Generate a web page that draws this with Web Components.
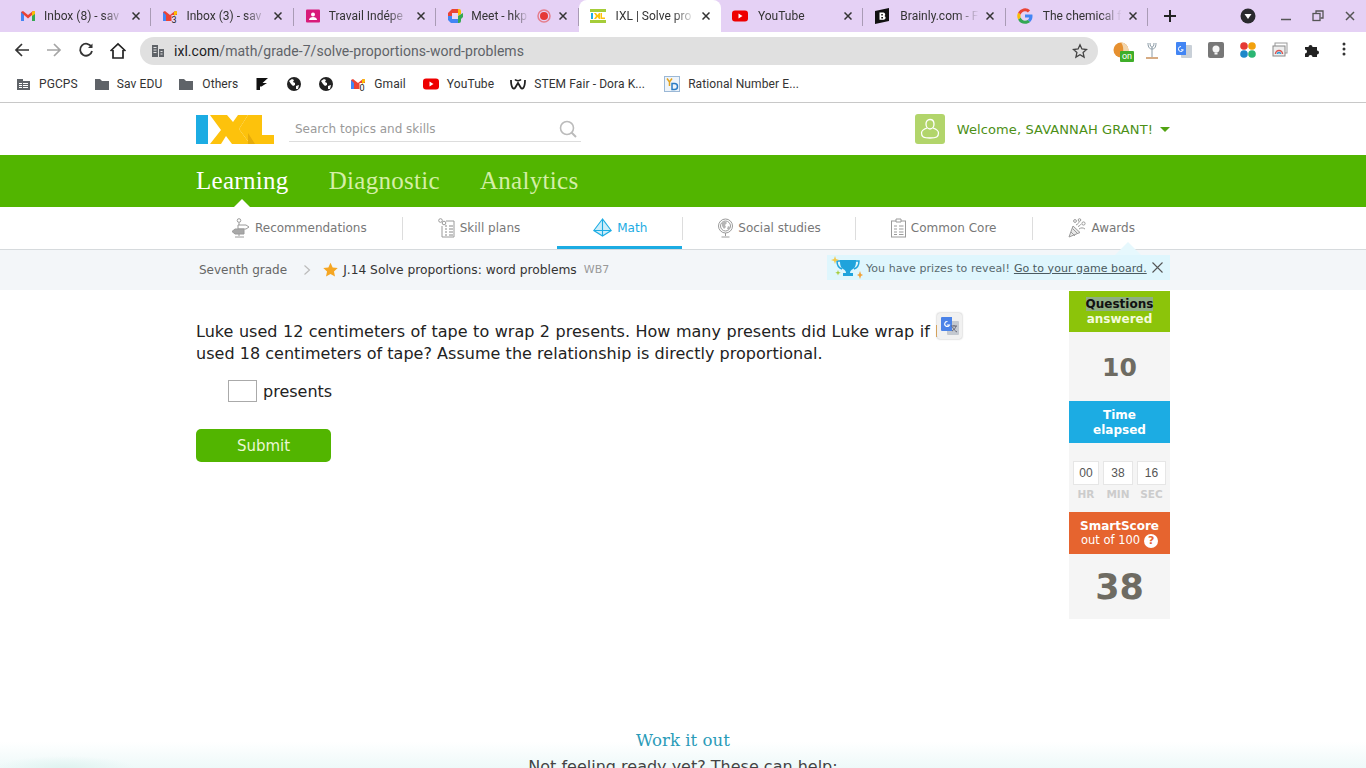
<!DOCTYPE html>
<html lang="en">
<head>
<meta charset="utf-8">
<title>IXL | Solve proportions: word problems</title>
<style>
  html, body { margin: 0; height: 768px; overflow: hidden; background: #fff; }
  body { font-family: "DejaVu Sans", sans-serif; }
  svg { display: block; }
</style>
</head>
<body>

<browser-strip>
  <browser-tab label="Inbox (8) - sav">
    <svg slot="icon" width="16" height="16" viewBox="0 0 16 16"><path d="M1 13V4l2-1 5 4 5-4 2 1v9h-3V7L8 10.500 4 7v6z" fill="#ea4335"/><path d="M1 13V4l3 3v6z" fill="#4285f4"/><path d="M15 13V4l-3 3v6z" fill="#34a853"/><path d="M12 3.500 15 3v3l-3 2z" fill="#fbbc04"/></svg>
  </browser-tab>
  <browser-tab label="Inbox (3) - sav">
    <svg slot="icon" width="16" height="16" viewBox="0 0 16 16"><path d="M1 13V4l2-1 5 4 5-4 2 1v3H9.500v6H12H4V7z" fill="#ea4335"/><path d="M1 13V4l3 3v6z" fill="#4285f4"/><path d="M12 3.500 15 3v3l-3 2z" fill="#fbbc04"/><text x="9.500" y="15" font-size="9" font-family="Roboto" fill="#222">3</text></svg>
  </browser-tab>
  <browser-tab label="Travail Indépe">
    <svg slot="icon" width="16" height="16" viewBox="0 0 16 16"><rect x="1" y="1.500" width="14" height="13" rx="1" fill="#d81b7a"/><circle cx="8" cy="6.500" r="2" fill="#fff"/><path d="M4 12c0-2 2-3 4-3s4 1 4 3z" fill="#fff"/></svg>
  </browser-tab>
  <browser-tab label="Meet - hkp" short>
    <svg slot="icon" width="16" height="16" viewBox="0 0 16 16"><path d="M1 5l4-4h6v4H5v3H1z" fill="#ea4335"/><path d="M1 8h4v3h6v4H4l-3-3z" fill="#4285f4"/><path d="M11 1h1a2 2 0 0 1 2 2v3l-3 2z" fill="#fbbc04"/><path d="M11 15h1a2 2 0 0 0 2-2v-2l2-2V5l-5 3z" fill="#34a853"/><rect x="5" y="5" width="6" height="6" fill="#e8d4f5"/></svg>
    <svg slot="extra" width="14" height="14" viewBox="0 0 14 14"><circle cx="7" cy="7" r="6" fill="none" stroke="#e53935" stroke-opacity=".55" stroke-width="1.500"/><circle cx="7" cy="7" r="4" fill="#e53935"/></svg>
  </browser-tab>
  <browser-tab label="IXL | Solve pro" active late>
    <svg slot="icon" width="16" height="16" viewBox="0 0 16 16"><rect y="1" width="16" height="3" fill="#a5cd39"/><rect y="12" width="16" height="3" fill="#a5cd39"/><rect x="1" y="5" width="2" height="6" fill="#1cace3"/><path d="M4 5h2l1.500 2L9 5h1v6H9L7.500 9 6 11H4l2-3z" fill="#fdc20c"/><path d="M10.500 5h1.500v4.500h3V11h-4.500z" fill="#fdc20c"/></svg>
  </browser-tab>
  <browser-tab label="YouTube" late>
    <svg slot="icon" width="16" height="16" viewBox="0 0 16 16"><rect y="2.500" width="16" height="11" rx="3" fill="#e00"/><path d="M6.500 5.500v5l4-2.500z" fill="#fff"/></svg>
  </browser-tab>
  <browser-tab label="Brainly.com - F" late>
    <svg slot="icon" width="16" height="16" viewBox="0 0 16 16"><path d="M1 3l14-3v13L1 16z" fill="#111"/><path d="M5.500 4.500h4a2 2 0 0 1 1 3.500 2 2 0 0 1-1 3.800h-4zM7.300 6v1.500h1.500V6zm0 3v1.500h1.700V9z" fill="#fff" fill-rule="evenodd"/></svg>
  </browser-tab>
  <browser-tab label="The chemical f" late>
    <svg slot="icon" width="16" height="16" viewBox="0 0 16 16"><path d="M15.500 8.200c0-.6 0-1.100-.2-1.600H8v3h4.200a3.600 3.600 0 0 1-1.600 2.400l2.500 1.900c1.500-1.300 2.400-3.300 2.400-5.700z" fill="#4285f4"/><path d="M8 15.700c2.100 0 3.800-.7 5.100-1.800L10.600 12c-.7.500-1.500.7-2.600.7-2 0-3.700-1.300-4.300-3.200L1.100 11.400A7.700 7.700 0 0 0 8 15.700z" fill="#34a853"/><path d="M3.700 9.500a4.700 4.700 0 0 1 0-3L1.100 4.600a7.700 7.700 0 0 0 0 6.800z" fill="#fbbc04"/><path d="M8 3.300c1.100 0 2.100.4 2.900 1.100l2.200-2.200A7.700 7.700 0 0 0 1.100 4.600l2.600 1.900C4.300 4.600 6 3.300 8 3.300z" fill="#ea4335"/></svg>
  </browser-tab>
</browser-strip>

<browser-toolbar></browser-toolbar>

<bookmark-bar>
  <book-mark label="PGCPS"><svg width="16" height="16" viewBox="0 0 16 16"><path d="M1 3h6v2h7v9H1z" fill="#5f6368"/><path d="M3 7h3v1H3zm4 0h5v1H7zm-4 2h3v1H3zm4 0h5v1H7zm-4 2h3v1H3zm4 0h5v1H7z" fill="#fff"/></svg></book-mark>
  <book-mark label="Sav EDU"><svg width="16" height="16" viewBox="0 0 16 16"><path d="M1 3h5l2 2h7v9H1z" fill="#5f6368"/></svg></book-mark>
  <book-mark label="Others" style="gap:8px"><svg width="16" height="16" viewBox="0 0 16 16"><path d="M1 3h5l2 2h7v9H1z" fill="#5f6368"/></svg></book-mark>
  <book-mark><svg width="16" height="16" viewBox="0 0 16 16"><path d="M2.500 2H14L8.500 7H13L7.500 10.500H6V14H2.500z" fill="#111"/></svg></book-mark>
  <book-mark><svg width="16" height="16" viewBox="0 0 16 16"><circle cx="8" cy="8" r="7" fill="#222"/><path d="M3 5l3-2 2 1-1 2 2 1v2l-2 1-2-2zM10 10l3-1-1 4-2 0z" fill="#fff"/></svg></book-mark>
  <book-mark><svg width="16" height="16" viewBox="0 0 16 16"><circle cx="8" cy="8" r="7" fill="#222"/><path d="M3 5l3-2 2 1-1 2 2 1v2l-2 1-2-2zM10 10l3-1-1 4-2 0z" fill="#fff"/></svg></book-mark>
  <book-mark label="Gmail" style="gap:8px"><svg width="16" height="16" viewBox="0 0 16 16"><path d="M1 13V4l2-1 5 4 5-4 2 1v3H9.500v6H12H4V7z" fill="#ea4335"/><path d="M1 13V4l3 3v6z" fill="#4285f4"/><path d="M12 3.500 15 3v3l-3 2z" fill="#fbbc04"/><text x="9.500" y="15" font-size="9" font-family="Roboto" fill="#222">0</text></svg></book-mark>
  <book-mark label="YouTube" style="margin-left:1px;gap:8px"><svg width="16" height="16" viewBox="0 0 16 16"><rect y="2.500" width="16" height="11" rx="3" fill="#e00"/><path d="M6.500 5.500v5l4-2.500z" fill="#fff"/></svg></book-mark>
  <book-mark label="STEM Fair - Dora K..." style="gap:8px"><svg width="16" height="16" viewBox="0 0 16 16"><path d="M1 4c0 8.500 3 10 4.300 7.500L8 7l2.700 4.500C12 14 15 12.500 15 4" fill="none" stroke="#222" stroke-width="1.800"/><path d="M5 3.500C6 5 10 5 11 3.500" fill="none" stroke="#222" stroke-width="1.500"/></svg></book-mark>
  <book-mark label="Rational Number E..." style="margin-left:3px;gap:8px"><svg width="16" height="16" viewBox="0 0 16 16"><rect x=".5" y=".5" width="15" height="15" fill="#eef4fa" stroke="#9bb8d6"/><path d="M3 2.500l2.500 3.500L8 2.500M5.500 6v4" fill="none" stroke="#e2a31e" stroke-width="1.500"/><path d="M8 7.500h2.500a3 3 0 0 1 0 6H8z" fill="none" stroke="#2b7cc4" stroke-width="1.500"/></svg></book-mark>
</bookmark-bar>

<ixl-header></ixl-header>
<ixl-nav></ixl-nav>

<ixl-subnav>
  <sub-item label="Recommendations" style="padding:0 35px"><svg width="19" height="20" viewBox="0 0 19 20" fill="none" stroke="#9a9a9a"><circle cx="8" cy="2.500" r="1.800"/><path d="M8 4.500V7M8 14v4M4 19h9M7 7h8l3 2-3 2H7z"/><path d="M13 11H4l-3 2.500L4 16h9z" fill="#a8a8a8"/></svg></sub-item>
  <sub-item label="Skill plans" style="padding-right:37px"><svg width="17" height="20" viewBox="0 0 17 20" fill="none" stroke="#9a9a9a"><circle cx="2.500" cy="2.500" r="1.800"/><circle cx="6" cy="5" r="1.800"/><path d="M8 3h8v16H4V8"/><path d="M7 8h2M11 8h4M7 11h2M11 11h4M7 14h2M11 14h4M7 17h2M11 17h4" stroke="#888"/></svg></sub-item>
  <sub-item label="Math" active style="padding-right:35px"><svg width="19" height="20" viewBox="0 0 19 20" fill="#1cace3" fill-opacity=".22" stroke="#1cace3" stroke-width="1.100"><path d="M9.500 1 .8 12.500 9.500 18l8.700-5.500zM9.500 1v17M.8 12.500h17.400"/></svg></sub-item>
  <sub-item label="Social studies" style="padding-right:34px"><svg width="15" height="20" viewBox="0 0 15 20" fill="none" stroke="#9a9a9a"><circle cx="7.500" cy="8" r="7"/><circle cx="7.500" cy="8" r="5"/><path d="M4 5l3-2 2 2-2 2 1 2-2 2-2-3zM10 8l2 1-1 3-2-1z" fill="#b5b5b5" stroke="none"/><path d="M7.500 15v3M3.500 19h8"/></svg></sub-item>
  <sub-item label="Common Core"><svg width="15" height="20" viewBox="0 0 15 20" fill="none" stroke="#9a9a9a"><rect x=".5" y="3" width="14" height="16"/><path d="M5 1h5v3H5z" fill="#fff"/><path d="M3 8h3M8 8h4.500M3 11h3M8 11h4.500M3 14h3M8 14h4.500M3 16.500h3M8 16.500h4.500"/></svg></sub-item>
  <sub-item label="Awards"><svg width="18" height="20" viewBox="0 0 18 20" fill="none" stroke="#9a9a9a"><path d="M1 19 5 8l7 6.500z" fill="#e8e8e8"/><path d="M3 14l4 4M4.500 10.500l5 5"/><circle cx="7" cy="3" r="1.400"/><circle cx="11.500" cy="2" r="1.300"/><circle cx="15.500" cy="5.500" r="1.600"/><path d="M8 7c2-1 3-2 3-3.500M11 11c2-1.500 4-1.500 6 0M10 8.500c1.500-.5 2.500-1.500 3-2.500"/></svg></sub-item>
</ixl-subnav>

<crumb-bar></crumb-bar>

<practice-area>
  <question-pane></question-pane>
  <stats-rail slot="rail"></stats-rail>
</practice-area>

<work-section></work-section>

<script>
// chrome tab, favicon comes in through the slot
class BrowserTab extends HTMLElement {
  constructor() {
    super();
    this.attachShadow({ mode: 'open' });
    this.shadowRoot.innerHTML = `
      <style>
        :host { display: flex; align-items: center; box-sizing: border-box; width: 142.400px; height: 32px; position: relative;
          padding-left: 11px; font: 12px Roboto, sans-serif; color: #333; flex: none; }
        :host([active]) { background: #fff; border-radius: 8px 8px 0 0; }
        :host(:not([active])) .sep { position: absolute; right: 0; top: 8px; height: 18px; width: 1px; background: #a99bb5; }
        .label { margin-left: 8px; width: 84px; white-space: nowrap;
          -webkit-mask-image: linear-gradient(to right, #000 70%, transparent 96%); }
        :host([late]) .label { margin-left: 10px; width: 82px; }
        :host([short]) .label { width: 60px; margin-right: 6px; }
        .close { margin-left: 4px; width: 8px; height: 8px; }
        :host([short]) .close { margin-left: 8px; }
      </style>
      <slot name="icon"></slot>
      <span class="label">${this.getAttribute('label')}</span>
      <slot name="extra"></slot>
      <svg class="close" viewBox="0 0 8 8"><path d="M.5.500l7 7M7.500.500l-7 7" stroke="#333" stroke-width="1.500" fill="none"/></svg>
      <span class="sep"></span>`;
  }
}

class BrowserStrip extends HTMLElement {
  constructor() {
    super();
    this.attachShadow({ mode: 'open' });
    this.shadowRoot.innerHTML = `
      <style>
        :host { display: flex; align-items: center; height: 32px; background: #e5d1f5; padding-left: 9px; }
        .plus { margin-left: 14px; }
        .right { margin-left: auto; display: flex; align-items: center; }
        .right svg { display: block; }
        .profile { margin-right: 14px; }
        .win { width: 32px; display: flex; justify-content: center; }
      </style>
      <slot></slot>
      <svg class="plus" width="16" height="16" viewBox="0 0 16 16"><path d="M8 2v12M2 8h12" stroke="#222" stroke-width="2"/></svg>
      <div class="right">
        <svg class="profile" width="16" height="16" viewBox="0 0 16 16"><circle cx="8" cy="8" r="7.500" fill="#2a2a2e"/><path d="M4.500 6h7L8 11z" fill="#fff"/></svg>
        <div class="win"><svg width="12" height="12" viewBox="0 0 12 12"><path d="M1 9.500h10" stroke="#555" stroke-width="1.500"/></svg></div>
        <div class="win"><svg width="12" height="12" viewBox="0 0 12 12" fill="none" stroke="#555" stroke-width="1.300"><rect x="1" y="3.500" width="7" height="7"/><path d="M4 3V1h7v7H8.500"/></svg></div>
        <div class="win"><svg width="12" height="12" viewBox="0 0 12 12"><path d="M2 2l8 8M10 2l-8 8" stroke="#555" stroke-width="1.500"/></svg></div>
      </div>`;
  }
}

class BrowserToolbar extends HTMLElement {
  constructor() {
    super();
    this.attachShadow({ mode: 'open' });
    this.shadowRoot.innerHTML = `
      <style>
        :host { display: flex; align-items: center; height: 38px; background: #fff; font: 14px Roboto, sans-serif; }
        svg { display: block; flex: none; }
        .btn { width: 32px; display: flex; justify-content: center; }
        .nav { display: flex; padding-left: 6px; margin-right: 6px; }
        .omni { width: 958px; height: 28px; border-radius: 14px; background: #e0e0e0; display: flex; align-items: center;
          box-sizing: border-box; padding: 0 10px 0 11px; color: #5f6368; flex: none; letter-spacing: .04px; }
        .omni b { font-weight: 400; color: #202124; }
        .url { margin-left: 9px; flex: 1; }
        .ext { display: flex; margin-left: 9px; }
      </style>
      <div class="nav">
        <div class="btn"><svg width="16" height="16" viewBox="0 0 16 16" fill="none" stroke="#333" stroke-width="1.700"><path d="M15 8H2M8 2 2 8l6 6"/></svg></div>
        <div class="btn"><svg width="16" height="16" viewBox="0 0 16 16" fill="none" stroke="#a5a5a5" stroke-width="1.700"><path d="M1 8h13M8 2l6 6-6 6"/></svg></div>
        <div class="btn"><svg width="16" height="16" viewBox="0 0 16 16" fill="none" stroke="#333" stroke-width="1.800"><path d="M13.500 5A6 6 0 1 0 14 9"/><path d="M14.500 1.500V6H10" fill="#333" stroke="none"/></svg></div>
        <div class="btn"><svg width="18" height="18" viewBox="0 0 18 18" fill="none" stroke="#222" stroke-width="1.700"><path d="M1.500 9 9 2l7.500 7M4 8v8h10V8"/></svg></div>
      </div>
      <div class="omni">
        <svg width="14" height="14" viewBox="0 0 14 14"><path d="M1 1h6v12H1zm7 4h5v8H8z" fill="#5f6368"/><path d="M2.500 3h3v1h-3zm0 2.500h3v1h-3zm0 2.500h3v1h-3zm7-1h2v1h-2zm0 2.500h2v1h-2z" fill="#e0e0e0"/></svg>
        <span class="url"><b>ixl.com</b>/math/grade-7/solve-proportions-word-problems</span>
        <svg width="16" height="16" viewBox="0 0 16 16"><path d="m8 1.800 1.900 4.200 4.600.5-3.400 3.100 1 4.500L8 11.800l-4.100 2.300 1-4.500-3.400-3.100 4.600-.5z" fill="none" stroke="#444" stroke-width="1.300"/></svg>
      </div>
      <div class="ext">
        <div class="btn" style="position:relative;width:29px"><svg width="18" height="18" viewBox="0 0 18 18"><circle cx="8" cy="8" r="7.500" fill="#e6902f"/><path d="M8 .500a7.500 7.500 0 0 1 0 15c3-3 3-12 0-15z" fill="#f2d6ae"/></svg><span style="position:absolute;left:13px;top:9px;width:14px;height:11px;background:#3fae29;color:#fff;font:9px/11px Roboto;text-align:center;border-radius:1px">on</span></div>
        <div class="btn"><svg width="16" height="18" viewBox="0 0 16 18" fill="none" stroke="#8a9aa5"><path d="M8 5v10M4 1c0 5 2 6 4 6s4-1 4-6M6 1c0 3 1 4 2 4s2-1 2-4"/><path d="M2 16h12" stroke="#c98f5a" stroke-width="1.500"/></svg></div>
        <div class="btn"><svg width="16" height="16" viewBox="0 0 16 16"><rect x="5" y="3" width="11" height="13" rx="1" fill="#c9d0d8"/><path d="M0 1a1 1 0 0 1 1-1h9v13H1a1 1 0 0 1-1-1z" fill="#4285f4"/><path d="M5 4.500a2.500 2.500 0 1 0 2.300 3.300H5" fill="none" stroke="#fff"/></svg></div>
        <div class="btn"><svg width="16" height="16" viewBox="0 0 16 16"><rect width="16" height="16" rx="2" fill="#777"/><circle cx="8" cy="7" r="3.500" fill="#f5f5f5"/><rect x="6.500" y="10.500" width="3" height="2" fill="#f5f5f5"/></svg></div>
        <div class="btn"><svg width="16" height="16" viewBox="0 0 16 16"><circle cx="4" cy="4" r="3.800" fill="#e53935"/><circle cx="12" cy="4" r="3.800" fill="#f2a10d"/><circle cx="4" cy="12" r="3.800" fill="#1e88c9"/><circle cx="12" cy="12" r="3.800" fill="#2bb673"/></svg></div>
        <div class="btn"><svg width="16" height="16" viewBox="0 0 16 16" fill="none"><rect x="3" y="1" width="12" height="10" fill="#fff" stroke="#999"/><rect x="1" y="4" width="12" height="10" fill="#eee" stroke="#888"/><path d="M3.500 12a3.500 3.500 0 0 1 7 0" stroke="#d9534f" stroke-width="1.500"/><path d="M5.500 12a1.500 1.500 0 0 1 3 0" stroke="#2f9fd8" stroke-width="1.500"/></svg></div>
        <div class="btn"><svg width="16" height="16" viewBox="0 0 16 16"><path d="M1 5h3.500a2 2 0 1 1 4 0H13v3.500a2 2 0 1 1 0 4V15H8.500a2 2 0 1 0-4 0H1v-3.500a2 2 0 1 0 0-4z" fill="#222"/></svg></div>
        <div class="btn"><svg width="4" height="14" viewBox="0 0 4 14"><circle cx="2" cy="2" r="1.500" fill="#333"/><circle cx="2" cy="7" r="1.500" fill="#333"/><circle cx="2" cy="12" r="1.500" fill="#333"/></svg></div>
      </div>`;
  }
}

class BookMark extends HTMLElement {
  constructor() {
    super();
    this.attachShadow({ mode: 'open' });
    const label = this.getAttribute('label');
    this.shadowRoot.innerHTML = `
      <style>
        :host { display: flex; align-items: center; gap: 7px; padding: 0 8px; font: 12px Roboto, sans-serif; letter-spacing: .1px; color: #333; white-space: nowrap; }
      </style>
      <slot></slot>${label ? `<span>${label}</span>` : ''}`;
  }
}

class BookmarkBar extends HTMLElement {
  constructor() {
    super();
    this.attachShadow({ mode: 'open' });
    this.shadowRoot.innerHTML = `
      <style>
        :host { display: flex; align-items: center; height: 28px; padding: 0 0 4px 8px; background: #fff; border-bottom: 1px solid #c8c8c8; }
      </style>
      <slot></slot>`;
  }
}

class IxlHeader extends HTMLElement {
  constructor() {
    super();
    this.attachShadow({ mode: 'open' });
    this.shadowRoot.innerHTML = `
      <style>
        :host { display: block; height: 52px; background: #fff; }
        .wrap { width: 974px; margin: 0 auto; height: 100%; display: flex; align-items: center; }
        .search { width: 292px; height: 26px; margin-left: 15px; box-sizing: border-box; border-bottom: 1px solid #ddd;
          display: flex; align-items: center; justify-content: space-between; padding: 0 4px 0 6px; font-size: 12px; color: #9a9a9a; }
        .user { margin-left: auto; display: flex; align-items: center; font-size: 13px; letter-spacing: .1px; color: #4c8f16; }
        .avatar { width: 30px; height: 30px; border-radius: 3px; background: #b2d56b; display: flex; align-items: center; justify-content: center; margin-right: 12px; }
        .caret { margin-left: 7px; width: 0; height: 0; border: 5px solid transparent; border-top: 5px solid #52a312; border-bottom: 0; }
      </style>
      <div class="wrap">
        <svg width="78" height="29" viewBox="0 0 78 29">
          <rect width="12" height="29" fill="#1cace3"/>
          <path d="M14 0h17l6 7 5-7h10L43 14l11 15H36l-6-8-5 8H14l11-14z" fill="#fdc20c"/>
          <path d="M52 0h14v20h12v9H54L43 14z" fill="#fdc20c"/>
          <path d="M52 12V29h7L52 18z" fill="#e6ab0a"/>
        </svg>
        <div class="search">
          <span>Search topics and skills</span>
          <svg width="18" height="18" viewBox="0 0 18 18" fill="none" stroke="#bbb" stroke-width="1.600"><circle cx="8" cy="8" r="6.500"/><path d="m12.500 12.500 4.500 4.500" stroke-width="2"/></svg>
        </div>
        <div class="user">
          <div class="avatar"><svg width="20" height="22" viewBox="0 0 20 22" fill="none" stroke="#fff" stroke-width="1.300"><path d="M10 1.500c2.800 0 4 2 4 4.500s-1.500 5-4 5-4-2.500-4-5 1.200-4.500 4-4.500z"/><path d="M7 10c-3 1-5.500 2-5.500 5 0 4 2 5 8.500 5s8.500-1 8.500-5c0-3-2.500-4-5.500-5"/></svg></div>
          <span>Welcome, SAVANNAH GRANT!</span>
          <span class="caret"></span>
        </div>
      </div>`;
  }
}

class IxlNav extends HTMLElement {
  constructor() {
    super();
    this.attachShadow({ mode: 'open' });
    this.shadowRoot.innerHTML = `
      <style>
        :host { display: block; height: 52px; background: #52b500; }
        .wrap { width: 974px; margin: 0 auto; height: 100%; display: flex; gap: 40px; align-items: center;
          font: 400 25px "Liberation Serif", serif; letter-spacing: .3px; color: #d4efa6; }
        span { position: relative; line-height: 52px; }
        .on { color: #fff; }
        .on::after { content: ""; position: absolute; left: 50%; bottom: 0; margin-left: -8px; border: 8px solid transparent; border-bottom-color: #fff; border-top: 0; }
      </style>
      <div class="wrap">
        <span class="on">Learning</span>
        <span>Diagnostic</span>
        <span>Analytics</span>
      </div>`;
  }
}

class SubItem extends HTMLElement {
  constructor() {
    super();
    this.attachShadow({ mode: 'open' });
    this.shadowRoot.innerHTML = `
      <style>
        :host { display: flex; align-items: center; justify-content: center; gap: 5px; height: 42px; padding: 0 36px; position: relative;
          font-size: 12px; color: #777; white-space: nowrap; flex: none; }
        :host([active]) { color: #1cace3; }
        .bar { position: absolute; left: 0; right: 0; bottom: 0; height: 3px; }
        :host([active]) .bar { background: #1cace3; }
        .sep { position: absolute; left: 0; top: 10px; height: 23px; width: 1px; background: #ddd; }
        :host(:first-child) .sep { display: none; }
        :host([active]) .sep { display: none; }
      </style>
      <span class="sep"></span>
      <slot></slot><span>${this.getAttribute('label')}</span><span class="bar"></span>`;
  }
}

class IxlSubnav extends HTMLElement {
  constructor() {
    super();
    this.attachShadow({ mode: 'open' });
    this.shadowRoot.innerHTML = `
      <style>
        :host { display: block; height: 42px; background: #fff; border-bottom: 1px solid #d6dadd; }
        .wrap { width: 974px; margin: 0 auto; display: flex; }
      </style>
      <div class="wrap"><slot></slot></div>`;
  }
}

class CrumbBar extends HTMLElement {
  constructor() {
    super();
    this.attachShadow({ mode: 'open' });
    this.shadowRoot.innerHTML = `
      <style>
        :host { display: block; height: 40px; background: #f3f6f9; font-size: 12px; position: relative; }
        .wrap { width: 974px; margin: 0 auto; height: 100%; display: flex; align-items: center; position: relative; box-sizing: border-box; padding: 0 0 1px 3px; }
        .grade { color: #666; }
        .chev { margin: 0 0 0 16px; }
        .star { margin: 0 5px 0 12px; }
        .name { color: #333; font-size: 12.250px; }
        .code { margin-left: 7px; font-size: 11px; color: #999; }
        .prize { position: absolute; right: 0; top: 5px; width: 343px; height: 25px; box-sizing: border-box; background: #dff6fd; display: flex; align-items: center;
          font-size: 11px; letter-spacing: .06px; color: #5a6a70; padding: 1px 0 0 3px; }
        .prize::before { content: ""; position: absolute; left: 288px; top: -13px; border: 13px solid transparent; border-bottom-color: #e6f8fd; border-top: 0; }
        .prize a { color: #4a5a60; text-decoration: underline; margin-left: 4px; }
        .prize .x { position: absolute; right: 7px; top: 7px; }
        .cup { margin-right: 3px; }
      </style>
      <div class="wrap">
        <span class="grade">Seventh grade</span>
        <svg class="chev" width="8" height="12" viewBox="0 0 8 12"><path d="m1.500 1.500 5 4.500-5 4.500" fill="none" stroke="#bbb" stroke-width="1.200"/></svg>
        <svg class="star" width="15" height="15" viewBox="0 0 16 16"><path d="m8 .800 2.300 5 5.400.6-4 3.700 1.100 5.400L8 12.800l-4.800 2.700 1.100-5.400-4-3.700 5.400-.6z" fill="#f5a623"/></svg>
        <span class="name">J.14 Solve proportions: word problems</span>
        <span class="code">WB7</span>
        <div class="prize">
          <svg class="cup" width="33" height="24" viewBox="0 0 33 24">
            <path d="M10 4h16c0 3 0 7-3 9-2 1-3 2-3 4h3v3H13v-3h3c0-2-1-3-3-4-3-2-3-6-3-9z" fill="#1fa3dc"/>
            <path d="M10 5H7c0 4 2 7 5 8M26 5h3c0 4-2 7-5 8" fill="none" stroke="#1fa3dc" stroke-width="1.500"/>
            <path d="M5 0l1 3 3 1-3 1-1 3-1-3-3-1 3-1z" fill="#f2c94c"/>
            <path d="M30 15l1 3 2 1-2 1-1 3-1-3-2-1 2-1z" fill="#f2a33a"/>
            <path d="M8 14l.7 2 2 .7-2 .7-.7 2-.7-2-2-.7 2-.7z" fill="#a5cd39"/>
          </svg>
          <span>You have prizes to reveal!</span><a>Go to your game board.</a>
          <svg class="x" width="11" height="11" viewBox="0 0 11 11"><path d="m.500.500 10 10M10.500.500l-10 10" stroke="#555" stroke-width="1.100"/></svg>
        </div>
      </div>`;
  }
}

class PracticeArea extends HTMLElement {
  constructor() {
    super();
    this.attachShadow({ mode: 'open' });
    this.shadowRoot.innerHTML = `
      <style>
        :host { display: block; height: 430px; background: #fff; }
        .wrap { width: 974px; margin: 0 auto; display: flex; justify-content: space-between; align-items: flex-start; }
      </style>
      <div class="wrap"><slot></slot><slot name="rail"></slot></div>`;
  }
}

class QuestionPane extends HTMLElement {
  constructor() {
    super();
    this.attachShadow({ mode: 'open' });
    this.shadowRoot.innerHTML = `
      <style>
        :host { display: block; width: 780px; padding-top: 31px; font-size: 16px; line-height: 22px; color: #222; position: relative; }
        p { margin: 0; width: 770px; letter-spacing: .03px; }
        p::first-line { word-spacing: .33px; }
        .answer { display: flex; align-items: flex-start; gap: 6px; height: 22px; margin: 15px 0 0 32px; }
        .box { width: 29px; height: 22px; box-sizing: border-box; border: 1px solid #aaa; background: #fff; }
        button { display: block; margin-top: 27px; width: 135px; height: 33px; border: 0; border-radius: 5px; background: #52b500; color: #eaf7d4;
          font: 15px "DejaVu Sans", sans-serif; }
        .gt { position: absolute; left: 741px; top: 23px; width: 25px; height: 26px; box-sizing: border-box; border-radius: 3px; background: #f1f1f1;
          box-shadow: 0 0 2px rgba(0,0,0,.35); display: flex; align-items: center; justify-content: center; }
      </style>
      <p>Luke used 12 centimeters of tape to wrap 2 presents. How many presents did Luke wrap if he used 18 centimeters of tape? Assume the relationship is directly proportional.</p>
      <div class="answer"><span class="box"></span><span style="margin-top:1px">presents</span></div>
      <button>Submit</button>
      <div class="gt"><svg width="20" height="20" viewBox="0 0 20 20"><rect x="7" y="5" width="12" height="14" rx="1" fill="#c4c9d0"/><path d="M1 2a1 1 0 0 1 1-1h10v14H2a1 1 0 0 1-1-1z" fill="#4b83e8"/><path d="M7.500 5.500a2.500 2.500 0 1 0 2 3.500H7" fill="none" stroke="#fff" stroke-width="1.100"/><path d="M11 10h6M14 9v1M12 15c2-1 3.500-3 4-5M12.500 11c1 2 2.500 4 4.500 5" fill="none" stroke="#667" stroke-width="1"/></svg></div>`;
  }
}

class StatsRail extends HTMLElement {
  constructor() {
    super();
    this.attachShadow({ mode: 'open' });
    this.shadowRoot.innerHTML = `
      <style>
        :host { display: block; width: 101px; margin-top: 1px; font-size: 12px; line-height: 15px; text-align: center; }
        .head { height: 41px; padding-top: 6px; box-sizing: border-box; color: #fff; font-weight: 700; }
        .green { background: #8cc40a; color: #f3fbdc; }
        .blue { background: #1cace3; height: 42px; padding-top: 7px; }
        .orange { background: #e6642f; height: 42px; padding-top: 7px; }
        .orange small { display: flex; justify-content: center; align-items: center; gap: 4px; margin-top: -1px; font-size: 11.500px; font-weight: 400; }
        .orange i { width: 14px; height: 14px; border-radius: 50%; background: #fff; color: #e6642f; font: 700 11px/14px "DejaVu Sans"; }
        mark { background: #8fae83; color: #111; padding: 0; }
        .val { background: #f5f5f5; color: #6e6b62; font-weight: 700; display: flex; align-items: center; justify-content: center; box-sizing: border-box; padding-top: 2px; }
        .ten { height: 69px; font-size: 25px; }
        .score { height: 65px; font-size: 35px; }
        .time { background: #f5f5f5; height: 69px; box-sizing: border-box; padding: 18px 4px 0; display: flex; gap: 4px; }
        .time div { flex: 1 1 auto; }
        .time b { display: block; height: 24px; box-sizing: border-box; background: #fff; border: 1px solid #e6e6e6; font: 400 12px/22px "Liberation Sans", sans-serif; color: #555; }
        .time span { display: block; margin-top: 2px; font-size: 10.500px; line-height: 14px; font-weight: 700; color: #ccc; }
      </style>
      <div class="head green"><mark>Questions</mark><br>answered</div>
      <div class="val ten">10</div>
      <div class="head blue">Time<br>elapsed</div>
      <div class="time">
        <div style="width:26px"><b>00</b><span>HR</span></div>
        <div style="width:30px"><b>38</b><span>MIN</span></div>
        <div style="width:29px"><b>16</b><span>SEC</span></div>
      </div>
      <div class="head orange">SmartScore<small>out of 100 <i>?</i></small></div>
      <div class="val score">38</div>`;
  }
}

class WorkSection extends HTMLElement {
  constructor() {
    super();
    this.attachShadow({ mode: 'open' });
    this.shadowRoot.innerHTML = `
      <style>
        :host { display: block; height: 48px; overflow: hidden; text-align: center;
          background: radial-gradient(70px 12px at 65px 48px, #dff3f0, transparent), linear-gradient(#fff 45%, #eef9f9 100%); }
        h2 { margin: 11px 0 0; font: 400 16.600px/20px "DejaVu Serif", serif; color: #2a9bb8; }
        p { margin: 6px 0 0; font-size: 16px; line-height: 20px; color: #444; }
      </style>
      <h2>Work it out</h2>
      <p>Not feeling ready yet? These can help:</p>`;
  }
}

customElements.define('browser-tab', BrowserTab);
customElements.define('browser-strip', BrowserStrip);
customElements.define('browser-toolbar', BrowserToolbar);
customElements.define('book-mark', BookMark);
customElements.define('bookmark-bar', BookmarkBar);
customElements.define('ixl-header', IxlHeader);
customElements.define('ixl-nav', IxlNav);
customElements.define('sub-item', SubItem);
customElements.define('ixl-subnav', IxlSubnav);
customElements.define('crumb-bar', CrumbBar);
customElements.define('practice-area', PracticeArea);
customElements.define('question-pane', QuestionPane);
customElements.define('stats-rail', StatsRail);
customElements.define('work-section', WorkSection);
</script>
</body>
</html>
